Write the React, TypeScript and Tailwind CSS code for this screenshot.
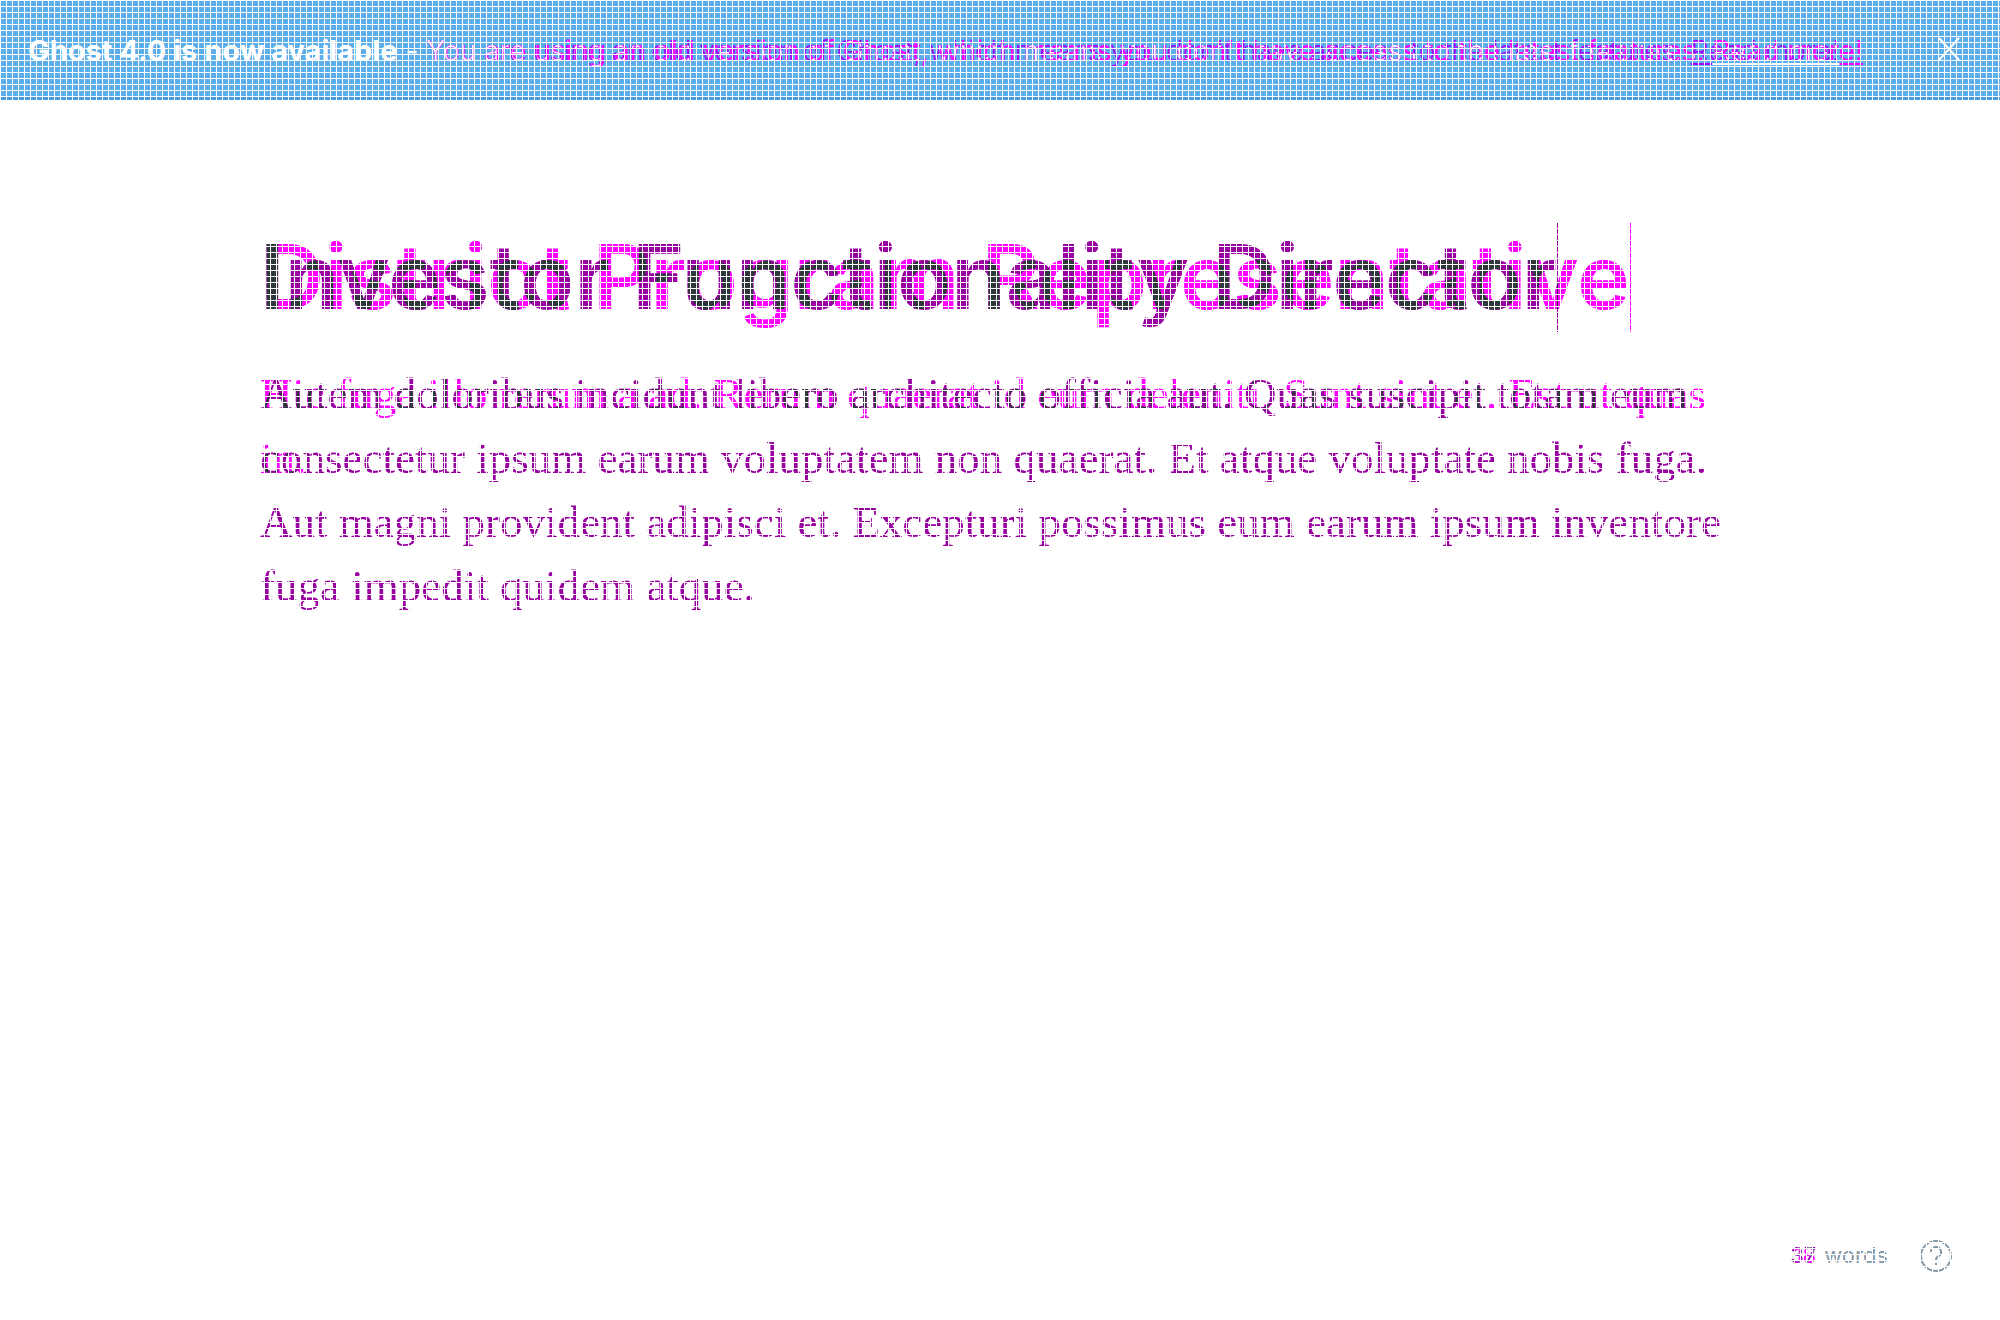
import React from "react";

export default function App() {
  return (
    <div className="relative flex min-h-screen flex-col bg-white font-['Inter',sans-serif]">
      <svg className="absolute h-0 w-0" aria-hidden="true">
        <filter id="ink" colorInterpolationFilters="sRGB">
          <feColorMatrix values="-.82 -.42 0 0 1.42  .22 .22 0 0 -.22  -.79 -.40 0 0 1.42  0 0 0 1 0" />
        </filter>
        <filter id="light" colorInterpolationFilters="sRGB">
          <feColorMatrix values="0 .34 0 0 .66  1 1 0 0 -1  0 0 0 0 1  0 0 0 1 0" />
        </filter>
        <filter id="muted" colorInterpolationFilters="sRGB">
          <feColorMatrix values="-.5 -.1 0 0 1.1  .55 .55 0 0 -.55  -.4 -.1 0 0 1.1  0 0 0 1 0" />
        </filter>
      </svg>
      <header className="flex h-25 items-center justify-between border-b-3 border-[#459ae0] bg-[#5caeea] pr-10 pl-7 text-[28px] text-white">
        <p className="flex items-baseline pt-1 whitespace-nowrap">
          <b className="text-[29px] font-bold">Ghost 4.0 is now available</b>
          <span className="px-2">-</span>
          <span className="grid [filter:url(#light)]">
            <span className="font-light text-[#ff0000] [grid-area:1/1]">
              You are using an old version of Ghost, which means you don't have access to the latest features. <a href="#a" className="underline">Read more!</a>
            </span>
            <span className="text-[#00ff00] mix-blend-screen [grid-area:1/1]">
              You are using an old version of Ghost, which means you don't have access to the latest features. <a href="#b" className="underline">Read more!</a>
            </span>
          </span>
        </p>
        <button aria-label="Close">
          <svg width="22" height="24" viewBox="0 0 22 24" stroke="white" strokeWidth="2"><path d="M1 1l20 22M21 1L1 23" /></svg>
        </button>
      </header>
      <main className="mx-auto w-full max-w-[1480px] flex-1 pt-[122px]">
        <h1 className="grid text-[89px] leading-[110px] font-semibold whitespace-nowrap [filter:url(#ink)]">
          <span className="flex text-[#ff0000] [grid-area:1/1]">Investor Functionality Director<i className="w-px bg-[#ff0000]" /></span>
          <span className="flex text-[#00ff00] mix-blend-screen [grid-area:1/1]">District Program Representative<i className="w-px bg-[#00ff00]" /></span>
        </h1>
        <div className="mt-[30px] grid font-['Liberation_Serif',serif] text-[45px] leading-[64px] whitespace-nowrap [filter:url(#ink)]">
          <p className="text-[#ff0000] [grid-area:1/1]">
            Autem doloribus incidunt libero architecto officia aut. Quas suscipit totam eum<br />
            consectetur ipsum earum voluptatem non quaerat. Et atque voluptate nobis fuga.<br />
            Aut magni provident adipisci et. Excepturi possimus eum earum ipsum inventore<br />
            fuga impedit quidem atque.
          </p>
          <p className="text-[#00ff00] mix-blend-screen [grid-area:1/1]">
            Hic fuga illo rerum a ad. Rerum quaerat id eum deleniti. Sunt sint et. Est ut quas<br />
            in.
          </p>
        </div>
      </main>
      <footer className="flex items-center justify-end gap-8 px-12 pb-12 text-[22px] text-[#8496a3]">
        <p className="flex gap-2">
          <span className="grid justify-items-end [filter:url(#muted)]">
            <span className="text-[#ff0000] [grid-area:1/1]">37</span>
            <span className="text-[#00ff00] mix-blend-screen [grid-area:1/1]">18</span>
          </span>
          <span>words</span>
        </p>
        <button aria-label="Help">
          <svg width="32" height="32" viewBox="0 0 32 32" fill="none" stroke="currentColor" strokeWidth="2">
            <circle cx="16" cy="16" r="15" />
            <path d="M11 12a5 5 0 1 1 7 4.500q-2 1-2 3.500M16 23v2" />
          </svg>
        </button>
      </footer>
      <div className="pointer-events-none absolute inset-0 bg-[linear-gradient(to_right,white_1px,transparent_1px),linear-gradient(to_bottom,white_1px,transparent_1px)] bg-[size:6px_6px]" />
    </div>
  );
}
